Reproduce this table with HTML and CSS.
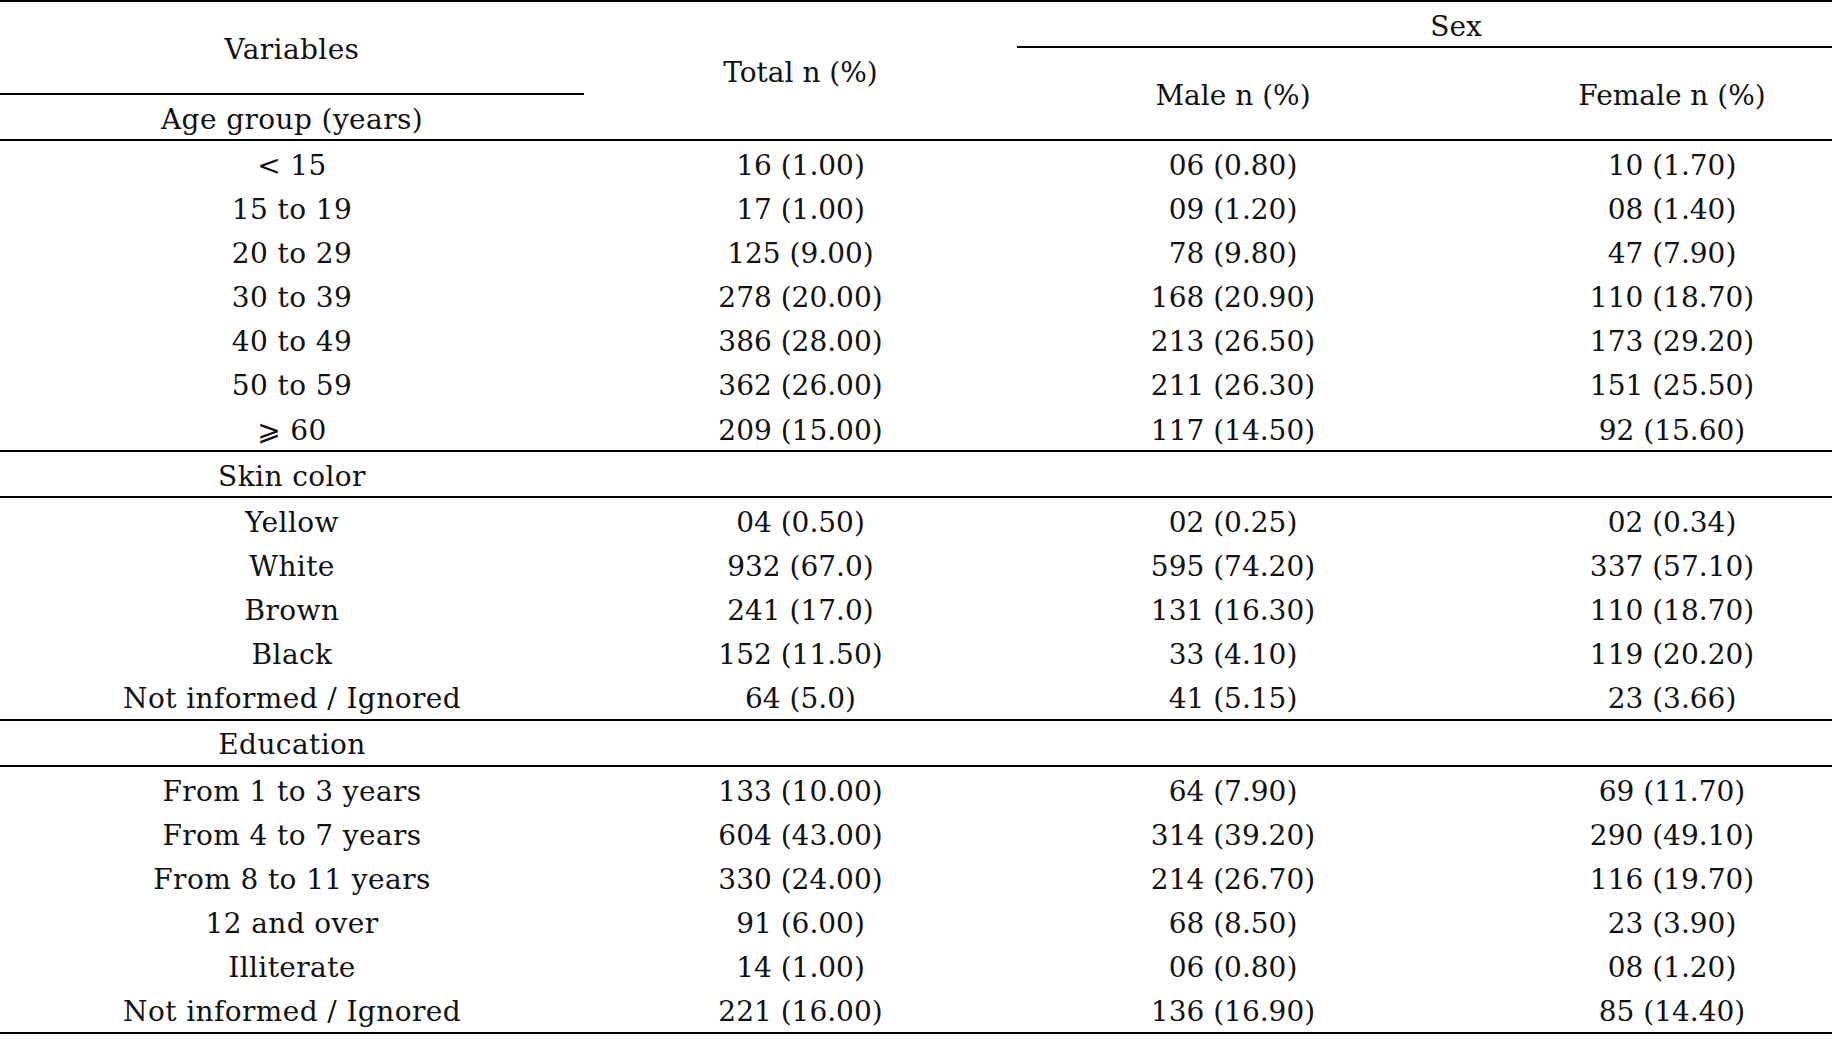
FILE: index.html
```html
<!DOCTYPE html>
<html lang="en">
<head>
<meta charset="utf-8">
<title>Table</title>
<link rel="stylesheet" href="styles.css">
</head>
<body>
<table class="data">
  <colgroup>
    <col class="c-var">
    <col class="c-total">
    <col class="c-male">
    <col class="c-female">
  </colgroup>
  <thead>
    <tr class="h-a">
      <th rowspan="2" class="rule label">Variables</th>
      <th rowspan="3" class="rule">Total n (%)</th>
      <th colspan="2" class="sex rule">Sex</th>
    </tr>
    <tr class="h-b">
      <th rowspan="2" class="rule">Male n (%)</th>
      <th rowspan="2" class="rule">Female n (%)</th>
    </tr>
    <tr class="h-c">
      <th class="rule label">Age group (years)</th>
    </tr>
  </thead>
  <tbody>
    <tr><td>&lt; 15</td><td>16 (1.00)</td><td>06 (0.80)</td><td>10 (1.70)</td></tr>
    <tr><td>15 to 19</td><td>17 (1.00)</td><td>09 (1.20)</td><td>08 (1.40)</td></tr>
    <tr><td>20 to 29</td><td>125 (9.00)</td><td>78 (9.80)</td><td>47 (7.90)</td></tr>
    <tr><td>30 to 39</td><td>278 (20.00)</td><td>168 (20.90)</td><td>110 (18.70)</td></tr>
    <tr><td>40 to 49</td><td>386 (28.00)</td><td>213 (26.50)</td><td>173 (29.20)</td></tr>
    <tr><td>50 to 59</td><td>362 (26.00)</td><td>211 (26.30)</td><td>151 (25.50)</td></tr>
    <tr class="last"><td>⩾ 60</td><td>209 (15.00)</td><td>117 (14.50)</td><td>92 (15.60)</td></tr>
    <tr class="section"><td>Skin color</td><td></td><td></td><td></td></tr>
    <tr><td>Yellow</td><td>04 (0.50)</td><td>02 (0.25)</td><td>02 (0.34)</td></tr>
    <tr><td>White</td><td>932 (67.0)</td><td>595 (74.20)</td><td>337 (57.10)</td></tr>
    <tr><td>Brown</td><td>241 (17.0)</td><td>131 (16.30)</td><td>110 (18.70)</td></tr>
    <tr><td>Black</td><td>152 (11.50)</td><td>33 (4.10)</td><td>119 (20.20)</td></tr>
    <tr class="last"><td>Not informed / Ignored</td><td>64 (5.0)</td><td>41 (5.15)</td><td>23 (3.66)</td></tr>
    <tr class="section"><td>Education</td><td></td><td></td><td></td></tr>
    <tr><td>From 1 to 3 years</td><td>133 (10.00)</td><td>64 (7.90)</td><td>69 (11.70)</td></tr>
    <tr><td>From 4 to 7 years</td><td>604 (43.00)</td><td>314 (39.20)</td><td>290 (49.10)</td></tr>
    <tr><td>From 8 to 11 years</td><td>330 (24.00)</td><td>214 (26.70)</td><td>116 (19.70)</td></tr>
    <tr><td>12 and over</td><td>91 (6.00)</td><td>68 (8.50)</td><td>23 (3.90)</td></tr>
    <tr><td>Illiterate</td><td>14 (1.00)</td><td>06 (0.80)</td><td>08 (1.20)</td></tr>
    <tr class="last"><td>Not informed / Ignored</td><td>221 (16.00)</td><td>136 (16.90)</td><td>85 (14.40)</td></tr>
  </tbody>
</table>
</body>
</html>
```

FILE: styles.css
```css
html, body {
  margin: 0;
  padding: 0;
  background: #ffffff;
  overflow: hidden;
}

.data {
  table-layout: fixed;
  width: 1895px;
  border-collapse: separate;
  border-spacing: 0;
  border-top: 2px solid #000;
  font-family: "DejaVu Serif", "DejaVu Sans", serif;
  font-size: 28px;
  line-height: 1.1;
  color: #111;
}

.c-var { width: 584px; }
.c-total { width: 433px; }
.c-male { width: 432px; }
.c-female { width: 446px; }

.data th,
.data td {
  padding: 6px 0 0 0;
  text-align: center;
  vertical-align: middle;
  font-weight: normal;
  white-space: nowrap;
}

.data th.label,
.data tbody td:first-child {
  letter-spacing: 0.4px;
}

.data th.rule {
  border-bottom: 2px solid #000;
}

.h-a { height: 46px; }
.h-b { height: 47px; }
.h-c { height: 46px; }

.data tbody td {
  height: 38.17px;
}

.data tbody tr.last td {
  height: 38.17px;
  border-bottom: 2px solid #000;
}

.data tbody tr.section td {
  height: 38px;
  border-bottom: 2px solid #000;
}
```
